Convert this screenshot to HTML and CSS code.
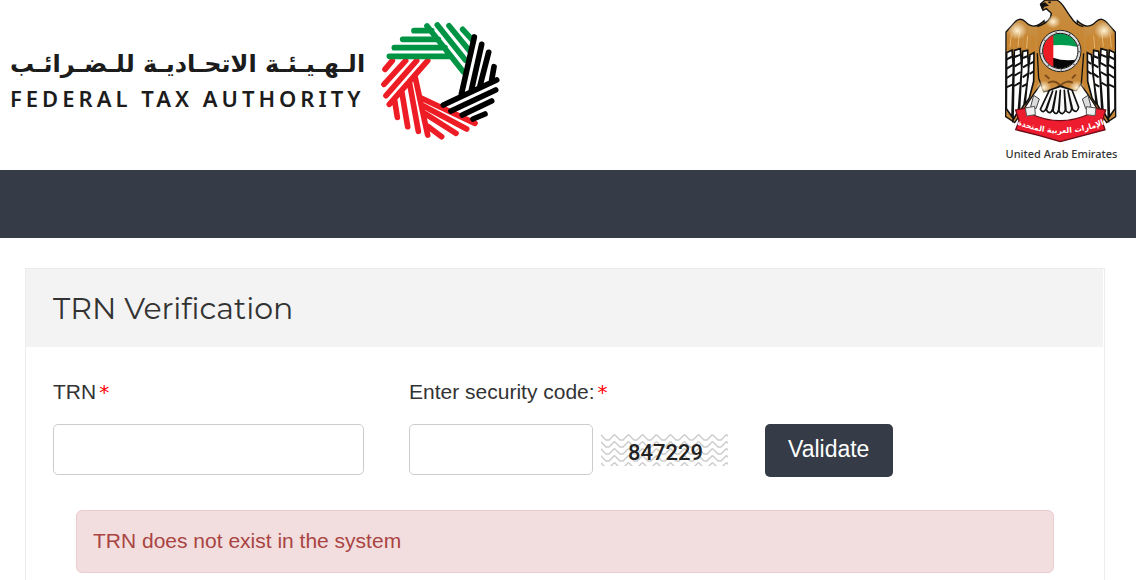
FILE: index.html
```html
<!DOCTYPE html>
<html lang="en">
<head>
<meta charset="utf-8">
<meta name="viewport" content="width=device-width, initial-scale=1">
<title>TRN Verification</title>
<link rel="stylesheet" href="styles.css">
</head>
<body>
<header class="masthead">
  <div class="brand">
    <div class="wordmark">
      <span class="wordmark-ar" lang="ar" dir="rtl">الـهـيـئـة الاتحـاديـة للـضـرائـب</span>
      <span class="wordmark-en">FEDERAL TAX AUTHORITY</span>
    </div>
    <svg class="brand-mark" viewBox="0 0 390 390" aria-hidden="true" fill="none" stroke-width="17" stroke-linecap="round">
      <path stroke="#ee1c25" d="M158 137 43 268M125 137 33 242M92 137 27 208M52 137 30 163M120 184 158 360M103 200 130 349M80 228 98 335M59 256 67 307M138 249 300 325M144 272 275 342M150 296 243 355M158 334 200 365"/>
      <path stroke="#009444" d="M117 47H170M83 73H190M58 98H210M43 124H228M156 33 265 170M187 30 271 135M222 32 284 108M263 43 293 76"/>
      <path stroke="#000" d="M298 66 259 238M320 88 289 226M341 112 315 212M357 155 350 195M365 195 205 270M362 225 228 288M350 258 262 300M330 297 294 312"/>
    </svg>
  </div>
  <figure class="emblem">
    <svg class="emblem-art" viewBox="0 0 405 435" role="img" aria-label="Emblem of the United Arab Emirates">
      <defs>
        <linearGradient id="gold" x1="0" y1="0" x2="0" y2="1">
          <stop offset="0" stop-color="#c89045"/><stop offset=".5" stop-color="#c68430"/><stop offset="1" stop-color="#c98a3c"/>
        </linearGradient>
        <radialGradient id="shine"><stop offset="0" stop-color="#fff2d5"/><stop offset="1" stop-color="#fff2d5" stop-opacity="0"/></radialGradient>
        <clipPath id="disc"><circle cx="199" cy="153" r="52"/></clipPath>
        <g id="wing">
          <path fill="url(#gold)" stroke="#111" stroke-width="4" d="M150 62C128 84 108 82 94 65 82 53 70 57 61 68L36 96 35 350 62 368 88 330 118 284 150 240 160 190Z"/>
          <path fill="#fff" stroke="#111" stroke-width="5" d="M38 158 54 150 58 202 54 350 37 326ZM61 151 79 146 83 204 73 333 57 360ZM86 154 101 151 104 218 90 314 76 338ZM108 164 120 158 119 244 106 294 93 314Z"/>
          <path fill="none" stroke="#111" stroke-width="6" d="M38 178 58 168M38 206 58 194M38 234 57 222M62 171 82 163M62 199 82 188M61 227 80 216M87 174 102 168M87 202 102 193M86 232 102 221M108 192 119 185M107 222 119 214M37 262 55 254M60 258 78 248M84 260 99 252"/>
          <path fill="#c9852f" d="M40 111 52 95 59 102 57 143 39 151ZM65 91 79 85 84 138 64 144ZM90 101 106 104 107 144 91 148ZM111 107 123 111 123 151 113 158Z"/>
          <path fill="none" stroke="#e0b879" stroke-width="3" d="M52 103 48 142M77 94 72 140M101 107 98 144"/>
          <ellipse cx="70" cy="92" rx="29" ry="27" fill="url(#shine)"/>
        </g>
      </defs>
      <use href="#wing"/>
      <use href="#wing" transform="matrix(-1 0 0 1 400 0)"/>
      <path fill="url(#gold)" d="M153 0H188C209 9 213 31 229 49 238 64 250 76 268 80L272 190 262 250 247 272 221 270 199 255 177 270 149 275 137 245 130 190 130 80C150 73 172 61 172 40L157 26 147 31 140 12Z"/>
      <path fill="none" stroke="#111" stroke-width="4" d="M268 80C250 76 238 64 229 49 213 31 209 9 188 0H153L140 12 147 31 157 26 172 40C172 61 150 73 130 80M130 160 134 235 149 275 177 270 199 255 221 270 247 272 262 250 269 160"/>
      <path fill="#111" d="M137 13 153 7 165 17 151 20 145 31ZM162 5 170 4 171 9 164 10Z"/>
      <ellipse cx="177" cy="65" rx="23" ry="20" fill="url(#shine)"/>
      <path fill="none" stroke="#7b4b1b" stroke-width="6" d="M162 249C177 240 190 247 199 257 209 246 226 240 237 250M153 225 166 236M245 224 234 235"/>
      <circle cx="199" cy="153" r="62" fill="#ddd" stroke="#222" stroke-width="3"/>
      <circle cx="199" cy="153" r="57" fill="none" stroke="#666" stroke-width="5" stroke-dasharray="4 38"/>
      <g clip-path="url(#disc)">
        <path fill="#fff" d="M140 90H260V215H140Z"/>
        <path fill="#009a4e" d="M177 90H260V143Q218 132 177 136Z"/>
        <path fill="#090909" d="M177 173Q217 187 260 176V220H177Z"/>
        <path fill="#ed1c24" d="M140 90H178V220H140Z"/>
      </g>
      <circle cx="199" cy="153" r="53" fill="none" stroke="#191919" stroke-width="3"/>
      <ellipse cx="149" cy="263" rx="24" ry="22" fill="url(#shine)"/>
      <ellipse cx="248" cy="263" rx="24" ry="22" fill="url(#shine)"/>
      <path fill="#f8f8f8" stroke="#111" stroke-width="5" stroke-linejoin="round" d="M166 271 139 328Q149 344 157 324L176 273 157 330Q169 348 176 326L187 273 177 333Q188 350 194 329L199 271 195 334Q206 350 214 330L211 271 216 333Q229 345 233 326L222 272 236 329Q249 342 254 322L234 270 200 259Z"/>
      <path fill="#ddd" stroke="#444" stroke-width="3" d="M119 286 110 320 126 326 136 297ZM282 286 291 320 275 326 265 297Z"/>
      <path fill="#ed1c2e" stroke="#700c16" stroke-width="4" d="M65 330 98 324 111 342Q198 382 286 342L303 324 335 330 325 365 333 389Q263 408 199 425 132 404 65 389L75 363Z"/>
      <path fill="#eee" stroke="#555" stroke-width="3" d="M94 324 122 319 124 344 98 348ZM277 320 306 324 303 347 277 344Z"/>
      <path id="ribbonLine" fill="none" d="M55 367Q200 432 345 367"/>
      <text class="ribbon-text" lang="ar" text-anchor="middle"><textPath href="#ribbonLine" startOffset="50%">الإمارات العربية المتحدة</textPath></text>
    </svg>
    <figcaption class="emblem-caption">United Arab Emirates</figcaption>
  </figure>
</header>
<nav class="navbar" aria-label="Main"></nav>
<main class="page">
  <section class="card">
    <h1 class="card-title">TRN Verification</h1>
    <form class="card-body">
      <div class="fields">
        <div class="field">
          <label class="label" for="trn">TRN<span class="required">*</span></label>
          <input class="input" id="trn" type="text">
        </div>
        <div class="field">
          <label class="label" for="code">Enter security code:<span class="required">*</span></label>
          <div class="code-row">
            <input class="input" id="code" type="text">
            <svg class="captcha" viewBox="0 0 127 32" role="img" aria-label="Security code 847229">
              <defs>
                <pattern id="waves" width="14" height="7" patternUnits="userSpaceOnUse">
                  <path d="M-2 3 0 1 5 6H8L13 1H14L16 3" fill="none" stroke="#ccc" stroke-width="1.4"/>
                </pattern>
              </defs>
              <rect width="127" height="32" fill="url(#waves)"/>
              <text class="captcha-text" x="27" y="26">847229</text>
            </svg>
          </div>
        </div>
        <div class="field">
          <button class="button" type="button">Validate</button>
        </div>
      </div>
      <p class="alert" role="alert">TRN does not exist in the system</p>
    </form>
  </section>
</main>
</body>
</html>
```
FILE: styles.css
```css
* { box-sizing: border-box; }
body {
  margin: 0;
  min-height: 100vh;
  display: flex;
  flex-direction: column;
  background: #fff;
  color: #333;
  font-family: Arial, "Liberation Sans", sans-serif;
  font-size: 21px;
  line-height: 24px;
}
.masthead {
  display: flex;
  justify-content: space-between;
  align-items: flex-start;
  padding: 0 7px 8px 10px;
}
.brand { display: flex; gap: 6px; padding-top: 15px; }
.wordmark {
  display: flex;
  flex-direction: column;
  padding-top: 31px;
  color: #1c1c1c;
  white-space: nowrap;
}
.wordmark-ar {
  padding-right: 4px;
  font-family: "DejaVu Sans", sans-serif;
  font-size: 24px;
  font-weight: 700;
  line-height: 36px;
}
.wordmark-en {
  font-family: "Noto Sans", sans-serif;
  font-size: 22px;
  font-weight: 600;
  line-height: 32px;
  letter-spacing: 4px;
}
.brand-mark { width: 130px; height: 130px; }
.emblem { margin: 0; width: 135px; text-align: center; }
.emblem-art { display: block; width: 100%; }
.emblem-caption {
  font-family: "Noto Sans", sans-serif;
  font-size: 11px;
  font-weight: 500;
  line-height: 17px;
  color: #333;
}
.ribbon-text {
  font-family: "DejaVu Sans", sans-serif;
  font-size: 23px;
  font-weight: 700;
  fill: #fff;
}
.navbar { height: 68px; background: #353c47; }
.page {
  flex: 1;
  display: flex;
  padding: 30px 31px 0 25px;
}
.card {
  flex: 1;
  border: 1px solid #ececec;
  border-bottom: 0;
}
.card-title {
  margin: 0 1px 0 0;
  padding: 21px 27px 19px;
  background: #f3f3f3;
  font-family: Montserrat, Inter, sans-serif;
  font-size: 30px;
  font-weight: 400;
  line-height: 38px;
}
.card-body { padding: 33px 28px 7px 27px; }
.fields {
  display: grid;
  grid-template-columns: repeat(3, 1fr);
  gap: 45px;
  align-items: end;
}
.field { min-width: 0; }
.label { display: block; margin-bottom: 20px; }
.required {
  margin-left: 3px;
  color: #f00;
  font-family: "DejaVu Sans", sans-serif;
  font-size: 20px;
  line-height: 20px;
}
.input {
  display: block;
  width: 100%;
  height: 51px;
  padding: 8px 16px;
  border: 1px solid #ccc;
  border-radius: 5px;
  background: #fff;
  font: inherit;
}
.code-row { display: flex; align-items: center; gap: 8px; margin-right: -8px; }
.code-row .input { flex: 1; min-width: 0; }
.captcha { flex: none; width: 127px; height: 32px; }
.captcha-text {
  font-family: Roboto, sans-serif;
  font-size: 22px;
  font-weight: 500;
  fill: #222;
}
.button {
  display: block;
  height: 53px;
  margin-bottom: -2px;
  padding: 0 24px 2px 23px;
  border: 0;
  border-radius: 5px;
  background: #353c47;
  color: #fff;
  font-family: inherit;
  font-size: 23px;
}
.alert {
  margin: 35px 22px 0 23px;
  padding: 18px 16px 19px;
  border: 1px solid #ebccd1;
  border-radius: 6px;
  background: #f2dede;
  color: #a94442;
}
```
